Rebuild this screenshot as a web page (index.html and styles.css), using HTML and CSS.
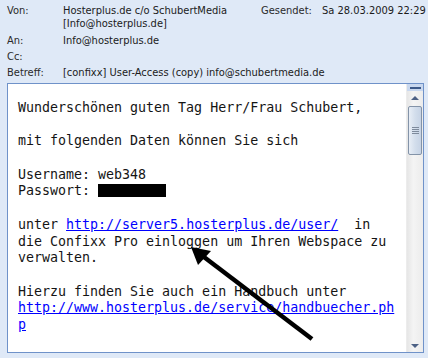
FILE: index.html
```html
<!DOCTYPE html>
<html>
<head>
  <meta charset="UTF-8">
  <title>Mail | User-Access</title>
  <link rel="stylesheet" href="styles.css">
</head>
<body>
  <div class="header">
    <div class="row row-from">
      <span class="label">Von:</span>
      <span class="value">Hosterplus.de c/o SchubertMedia<br>[Info@hosterplus.de]</span>
      <span class="label sent">Gesendet:</span>
      <span class="value date">Sa 28.03.2009 22:29</span>
    </div>
    <div class="row">
      <span class="label">An:</span>
      <span class="value">Info@hosterplus.de</span>
    </div>
    <div class="row">
      <span class="label">Cc:</span>
      <span class="value"></span>
    </div>
    <div class="row">
      <span class="label">Betreff:</span>
      <span class="value">[confixx] User-Access (copy) info@schubertmedia.de</span>
    </div>
  </div>
  <div class="message">
    <div class="body">
      <p>Wunderschönen guten Tag Herr/Frau Schubert,</p>
      <p>mit folgenden Daten können Sie sich</p>
      <p>Username: web348<br>Passwort: <span class="redacted"></span></p>
      <p>unter <a href="#">http://server5.hosterplus.de/user/</a>&nbsp; in<br>die Confixx Pro einloggen um Ihren Webspace zu<br>verwalten.</p>
      <p>Hierzu finden Sie auch ein Handbuch unter<br><a href="#">http://www.hosterplus.de/service/handbuecher.ph<br>p</a></p>
    </div>
    <div class="scrollbar">
      <div class="split"><span class="dash"></span></div>
      <div class="btn"><span class="up"></span></div>
      <div class="thumb"><span class="grip"></span></div>
      <div class="track"></div>
      <div class="btn"><span class="down"></span></div>
    </div>
  </div>
  <svg class="arrow" width="428" height="358" viewBox="0 0 428 358">
    <line x1="312" y1="339" x2="200" y2="254" stroke="#000" stroke-width="4.5"/>
    <polygon points="191,247 211,251 198,265" fill="#000"/>
  </svg>
</body>
</html>
```

FILE: styles.css
```css
body {
  margin: 0;
  padding: 0;
  width: 428px;
  height: 358px;
  background: #dfe9f7;
  position: relative;
  overflow: hidden;
}
.header {
  padding-top: 4px;
  font-family: "DejaVu Sans", sans-serif;
  font-stretch: condensed;
  font-size: 11px;
  color: #1b1b1b;
}
.row {
  display: flex;
  height: 16px;
  line-height: 16px;
}
.row-from {
  height: 26px;
  line-height: 13px;
  margin-bottom: 3px;
}
.label {
  width: 56px;
  padding-left: 7px;
  color: #2a2a2a;
}
.value {
  flex: none;
}
.row-from .value:nth-child(2) {
  width: 143px;
  white-space: nowrap;
}
.sent {
  width: 61px;
  padding-left: 55px;
}
.message {
  margin: 2px 4px 0 7px;
  height: 268px;
  border: 1px solid #6f92c9;
  background: #fff;
  display: flex;
  overflow: hidden;
}
.body {
  flex: 1;
  padding: 16px 0 0 10px;
  font-family: "DejaVu Sans Mono", monospace;
  font-size: 13.3px;
  line-height: 16.7px;
  color: #141414;
  white-space: nowrap;
}
.body p {
  margin: 0 0 16.7px;
}
.body a {
  color: #0000ff;
  text-decoration: underline;
}
.redacted {
  display: inline-block;
  width: 68px;
  height: 13px;
  background: #000;
  vertical-align: -2px;
}
.scrollbar {
  width: 16px;
  display: flex;
  flex-direction: column;
  background: linear-gradient(to right, #e6e6e6, #f4f4f4 40%, #ececec);
  border-left: 1px solid #ececec;
}
.split {
  height: 7px;
  background: #c9d8ef;
  display: flex;
  align-items: center;
  justify-content: center;
}
.dash {
  width: 11px;
  height: 2px;
  background: #3d5a8a;
}
.btn {
  height: 13px;
  display: flex;
  align-items: center;
  justify-content: center;
}
.up {
  border-left: 4px solid transparent;
  border-right: 4px solid transparent;
  border-bottom: 4px solid #4d6185;
}
.down {
  border-left: 4px solid transparent;
  border-right: 4px solid transparent;
  border-top: 4px solid #4d6185;
}
.thumb {
  height: 47px;
  margin: 2px 1px 0 1px;
  border: 1px solid #8393a8;
  border-radius: 2px;
  background: linear-gradient(to right, #e8eef6, #d3deec 50%, #c6d3e5);
  display: flex;
  align-items: center;
  justify-content: center;
}
.grip {
  width: 7px;
  height: 7px;
  background: repeating-linear-gradient(#7d8a9c 0 1px, transparent 1px 2px);
}
.track {
  flex: 1;
}
.arrow {
  position: absolute;
  top: 0;
  left: 0;
  pointer-events: none;
}
```
